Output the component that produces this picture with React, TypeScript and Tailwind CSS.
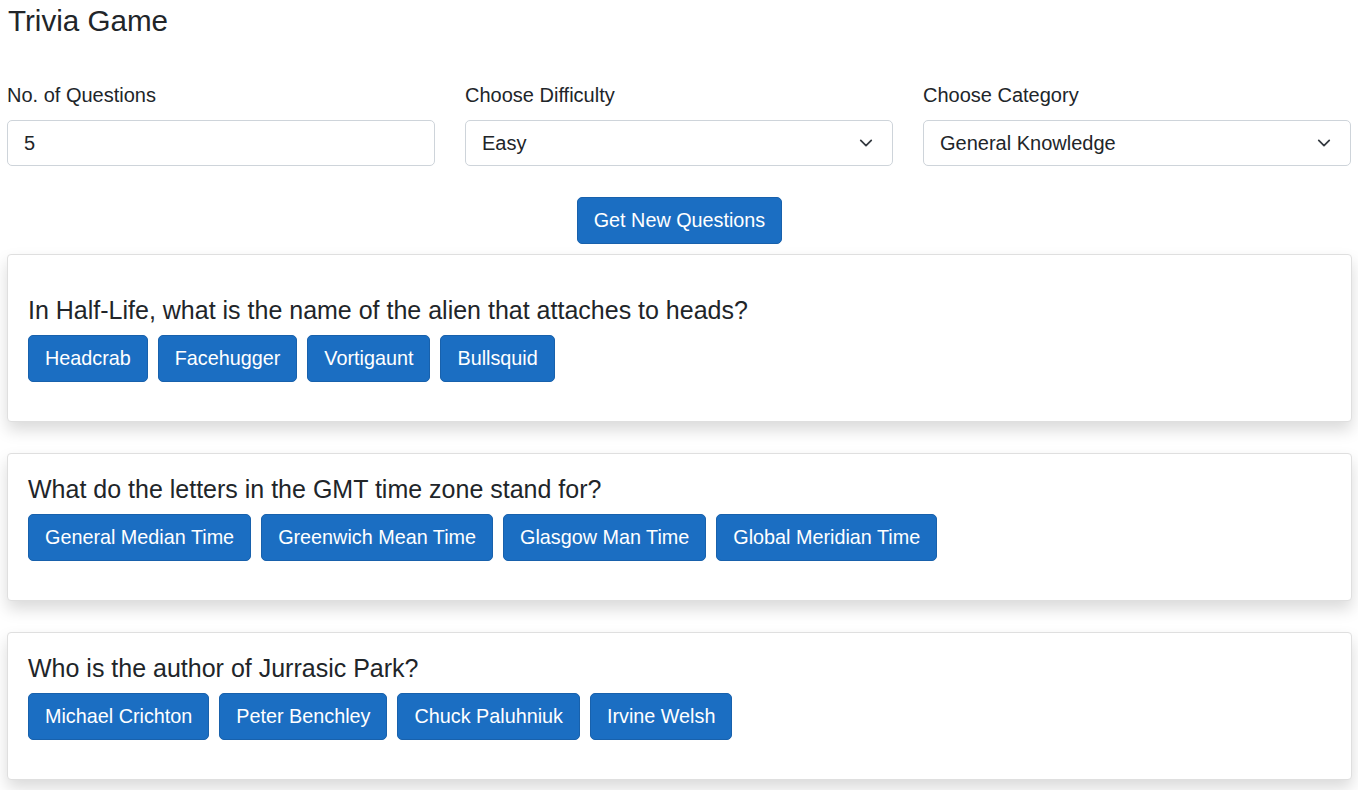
import React from "react";

const questions = [
  {
    q: "In Half-Life, what is the name of the alien that attaches to heads?",
    a: ["Headcrab", "Facehugger", "Vortigaunt", "Bullsquid"],
  },
  {
    q: "What do the letters in the GMT time zone stand for?",
    a: ["General Median Time", "Greenwich Mean Time", "Glasgow Man Time", "Global Meridian Time"],
  },
  {
    q: "Who is the author of Jurrasic Park?",
    a: ["Michael Crichton", "Peter Benchley", "Chuck Paluhniuk", "Irvine Welsh"],
  },
];

function Chevron() {
  return (
    <svg width="14" height="14" viewBox="0 0 16 16" className="shrink-0">
      <path d="M2 5l6 6 6-6" fill="none" stroke="#343a40" strokeWidth="2" strokeLinecap="round" strokeLinejoin="round" />
    </svg>
  );
}

function Field({ label, value, select }: { label: string; value: string; select?: boolean }) {
  return (
    <div className="flex flex-col">
      <label className="text-[20px] leading-[28px] mb-[11px]">{label}</label>
      <div className="h-[46px] border border-[#ced4da] rounded-[5px] bg-white flex items-center pl-[16px] pr-[19px] justify-between text-[20px]">
        <span>{value}</span>
        {select && <Chevron />}
      </div>
    </div>
  );
}

export default function App() {
  return (
    <div
      className="min-h-screen bg-white text-[#212529] px-[7px]"
      style={{ fontFamily: '"Liberation Sans", Arial, sans-serif' }}
    >
      <h3 className="text-[29.6px] leading-[36px] pt-[3px] pl-[1px] font-normal">Trivia Game</h3>
      <div className="grid grid-cols-3 gap-x-[30px] mt-[42px]">
        <Field label="No. of Questions" value="5" />
        <Field label="Choose Difficulty" value="Easy" select />
        <Field label="Choose Category" value="General Knowledge" select />
      </div>
      <div className="flex justify-center mt-[31px] ml-[1px]">
        <button className="h-[47px] px-[16px] bg-[#1b6ec2] border border-[#1861ac] rounded-[5px] text-white text-[19.8px]">
          Get New Questions
        </button>
      </div>
      <div className="flex flex-col gap-[31px] mt-[10px] mr-[-1px]">
        {questions.map((item, i) => (
          <div
            key={i}
            className={
              "bg-white border border-[#dfdfdf] rounded-[4px] shadow-[0_8px_16px_rgba(0,0,0,0.15)] pl-[20px] pb-[39px] " +
              (i === 0 ? "pt-[40px]" : "pt-[20px]")
            }
          >
            <div className="text-[25px] leading-[30px]">{item.q}</div>
            <div className="flex gap-[10px] mt-[10px]">
              {item.a.map((ans) => (
                <button
                  key={ans}
                  className="h-[47px] px-[16px] bg-[#1b6ec2] border border-[#1861ac] rounded-[5px] text-white text-[19.8px]"
                >
                  {ans}
                </button>
              ))}
            </div>
          </div>
        ))}
      </div>
    </div>
  );
}
